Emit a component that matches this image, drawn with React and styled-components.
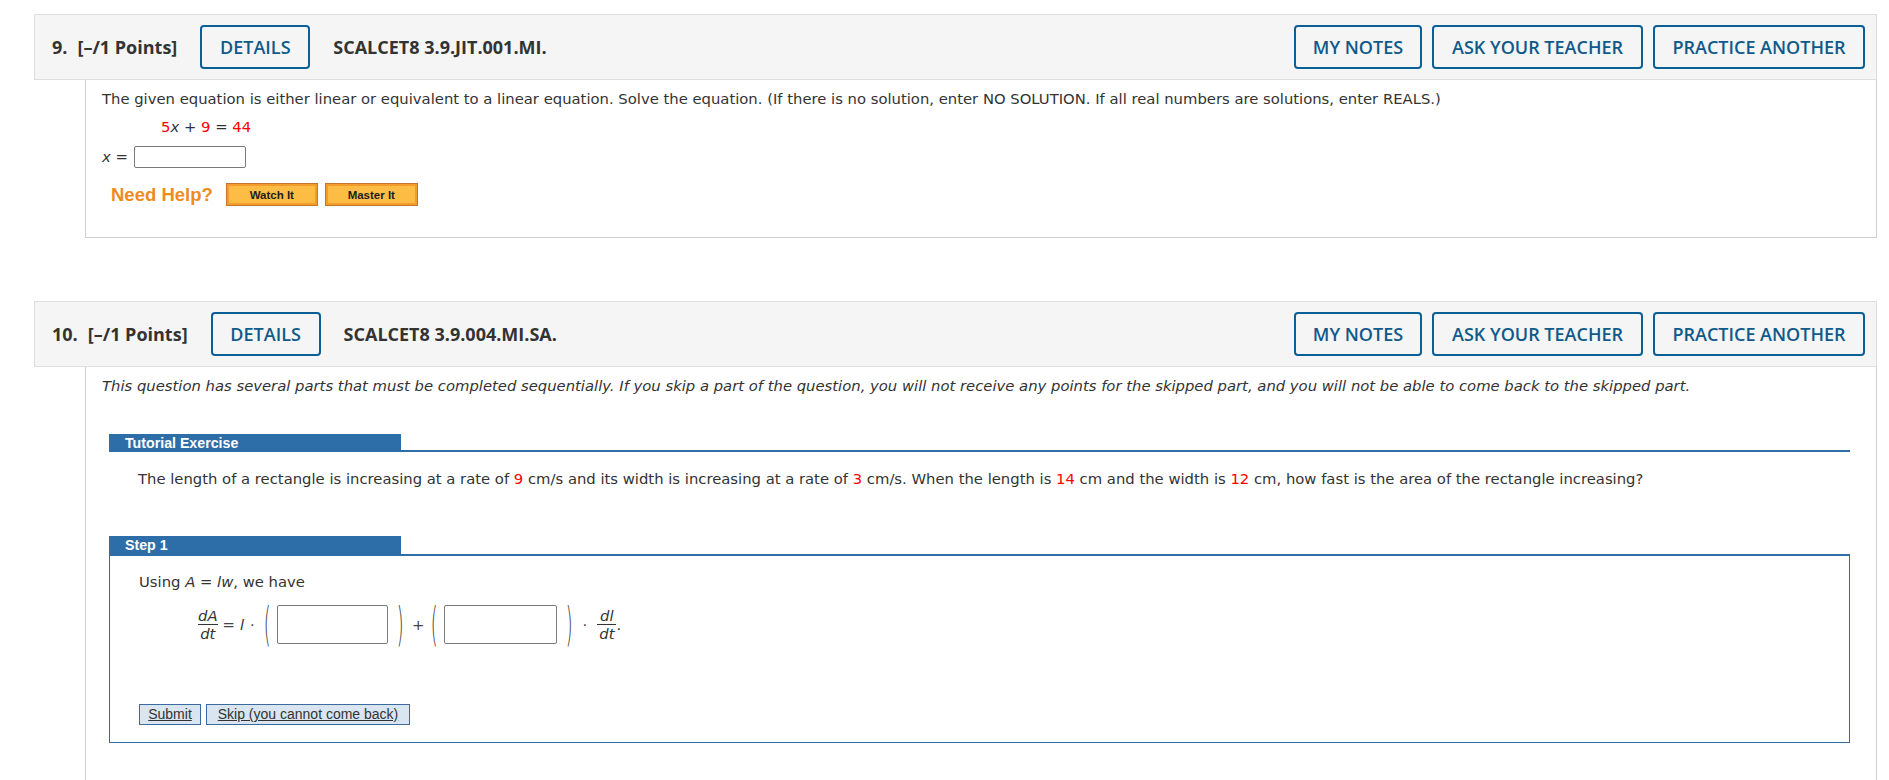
import React from 'react';
import styled, { createGlobalStyle } from 'styled-components';

const Global = createGlobalStyle`
  html, body { margin: 0; padding: 0; background: #fff; }
  body { font-family: "DejaVu Sans", Verdana, sans-serif; color: #333; }
`;

const Page = styled.div`
  width: 1889px;
  height: 780px;
  overflow: hidden;
  box-sizing: border-box;
  padding: 14px 12px 0 34px;
`;

const Question = styled.section`
  margin-bottom: ${p => p.$gap || 0}px;
`;

const Header = styled.div`
  display: flex;
  align-items: center;
  height: 66px;
  box-sizing: border-box;
  background: #f5f5f5;
  border: 1px solid #dedede;
  padding: 0 11px 0 17px;
  font-family: "Open Sans", sans-serif;
  font-size: 18px;
  color: #333;
`;

const Num = styled.span`
  font-weight: 700;
  margin-right: 10px;
`;

const Points = styled.span`
  font-weight: 700;
  margin-right: 23px;
`;

const Title = styled.span`
  font-weight: 700;
  margin-left: 23px;
`;

const HButton = styled.button`
  height: 44px;
  box-sizing: border-box;
  border: 2px solid #0a5f97;
  border-radius: 4px;
  background: transparent;
  color: #0f5a8a;
  font-family: "Open Sans", sans-serif;
  font-size: 18px;
  font-weight: 600;
  padding: 0;
  white-space: nowrap;
  width: ${p => p.$w}px;
  cursor: pointer;
`;

const RightGroup = styled.div`
  margin-left: auto;
  display: flex;
  gap: 10px;
`;

const Body = styled.div`
  margin-left: 51px;
  border: 1px solid #d0d0d0;
  border-top: none;
  padding: 9px 16px 0 16px;
  height: ${p => (p.$h ? `${p.$h}px` : 'auto')};
  box-sizing: border-box;
  font-size: 14.8px;
  line-height: 20px;
  ${p => p.$open && 'border-bottom: none; min-height: 420px;'}
`;

const Para = styled.div`
  font-style: ${p => (p.$italic ? 'italic' : 'normal')};
  margin: 0 0 0 ${p => p.$indent || 0}px;
  margin-top: ${p => p.$top || 0}px;
  white-space: nowrap;
`;

const Red = styled.span`
  color: #f00;
`;

const Var = styled.i`
  font-style: italic;
`;

const AnswerRow = styled.div`
  display: flex;
  align-items: center;
  gap: 6px;
  margin-top: ${p => p.$top || 0}px;
  height: ${p => p.$h || 22}px;
`;

const AnswerBox = styled.input`
  width: ${p => p.$w}px;
  height: ${p => p.$h}px;
  box-sizing: border-box;
  border: 1px solid #7a7a7a;
  border-radius: 2px;
  padding: 0;
  margin: 0;
  background: #fff;
`;

const HelpRow = styled.div`
  display: flex;
  align-items: center;
  margin-top: 15px;
  margin-left: 9px;
`;

const NeedHelp = styled.span`
  font-family: "Liberation Sans", Arial, sans-serif;
  font-weight: 700;
  font-size: 18.5px;
  color: #ee8b1f;
  margin-right: 13px;
`;

const HelpButton = styled.button`
  width: ${p => p.$w}px;
  height: 23px;
  box-sizing: border-box;
  border: 1px solid #c3762c;
  box-shadow: inset 0 0 0 2px #f39c2c;
  background: #fdbc44;
  font-family: "Liberation Sans", Arial, sans-serif;
  font-weight: 700;
  font-size: 11.5px;
  color: #1d1d1d;
  padding: 0;
  margin-right: 7px;
`;

const Section = styled.div`
  margin: ${p => p.$top}px 10px 0 7px;
`;

const TabBar = styled.div`
  display: flex;
  align-items: flex-end;
  border-bottom: 2px solid #2e6ea8;
  height: ${p => p.$h}px;
  box-sizing: border-box;
`;

const Tab = styled.div`
  width: 292px;
  height: 100%;
  background: #2e6ea8;
  color: #fff;
  font-family: "Liberation Sans", Arial, sans-serif;
  font-weight: 700;
  font-size: 14.2px;
  line-height: 19px;
  padding-left: 16px;
  box-sizing: border-box;
  margin-bottom: -2px;
`;

const StepBox = styled.div`
  border: 1px solid #2e6ea8;
  border-top: none;
  padding: 16px 29px 16px 29px;
  height: 187px;
  box-sizing: border-box;
`;

const MathRow = styled.div`
  display: flex;
  align-items: center;
  margin: 12px 0 0 59px;
  height: 41px;
`;

const Frac = styled.span`
  display: inline-flex;
  flex-direction: column;
  align-items: center;
  font-style: italic;
  font-size: 14.8px;
  line-height: 16px;
  margin: ${p => p.$m || '0'};
`;

const FracBottom = styled.span`
  border-top: 1px solid #333;
  padding: 1px 2px 0;
  align-self: stretch;
  text-align: center;
`;

const Op = styled.span`
  margin: 0 ${p => p.$m || 4}px;
  color: #444;
`;

const Paren = styled.span`
  display: inline-block;
  font-size: 22px;
  font-weight: 300;
  color: #3a3a3a;
  transform: scale(0.8, 2.1);
  margin: 0 ${p => p.$r ?? 4}px 0 ${p => p.$l ?? 4}px;
  line-height: 20px;
`;

const ButtonRow = styled.div`
  display: flex;
  gap: 5px;
  margin-top: 59px;
`;

const SubmitButton = styled.button`
  height: 21px;
  box-sizing: border-box;
  background: #d9e5f0;
  border: 1px solid #3b6b9c;
  font-family: "Liberation Sans", Arial, sans-serif;
  font-size: 14px;
  color: #333;
  text-decoration: underline;
  padding: 0;
  line-height: 17px;
  width: ${p => p.$w}px;
`;

function QHeader({ num, title }) {
  return (
    <Header>
      <Num>{num}.</Num>
      <Points>[–/1 Points]</Points>
      <HButton $w={110}>DETAILS</HButton>
      <Title>{title}</Title>
      <RightGroup>
        <HButton $w={128}>MY NOTES</HButton>
        <HButton $w={211}>ASK YOUR TEACHER</HButton>
        <HButton $w={212}>PRACTICE ANOTHER</HButton>
      </RightGroup>
    </Header>
  );
}

export default function App() {
  return (
    <Page>
      <Global />
      <Question $gap={63}>
        <QHeader num="9" title="SCALCET8 3.9.JIT.001.MI." />
        <Body $h={158}>
          <Para>
            The given equation is either linear or equivalent to a linear equation. Solve the equation. (If there is no solution, enter NO SOLUTION. If all real numbers are solutions, enter REALS.)
          </Para>
          <Para $indent={59} $top={8}>
            <Red>5</Red><Var>x</Var> + <Red>9</Red> = <Red>44</Red>
          </Para>
          <AnswerRow $top={9}>
            <span><Var>x</Var> =</span>
            <AnswerBox $w={112} $h={22} />
          </AnswerRow>
          <HelpRow>
            <NeedHelp>Need Help?</NeedHelp>
            <HelpButton $w={92}>Watch It</HelpButton>
            <HelpButton $w={93}>Master It</HelpButton>
          </HelpRow>
        </Body>
      </Question>
      <Question>
        <QHeader num="10" title="SCALCET8 3.9.004.MI.SA." />
        <Body $open>
          <Para $italic>
            This question has several parts that must be completed sequentially. If you skip a part of the question, you will not receive any points for the skipped part, and you will not be able to come back to the skipped part.
          </Para>
          <Section $top={36}>
            <TabBar $h={20}>
              <Tab>Tutorial Exercise</Tab>
            </TabBar>
            <Para $indent={29} $top={17}>
              The length of a rectangle is increasing at a rate of <Red>9</Red> cm/s and its width is increasing at a rate of <Red>3</Red> cm/s. When the length is <Red>14</Red> cm and the width is <Red>12</Red> cm, how fast is the area of the rectangle increasing?
            </Para>
          </Section>
          <Section $top={45}>
            <TabBar $h={22}>
              <Tab>Step 1</Tab>
            </TabBar>
            <StepBox>
              <Para>
                Using <Var>A</Var> = <Var>lw</Var>, we have
              </Para>
              <MathRow>
                <Frac>
                  <span>dA</span>
                  <FracBottom>dt</FracBottom>
                </Frac>
                <Op $m={5}>=</Op>
                <Var>l</Var>
                <Op $m={6}>·</Op>
                <Paren $l={2} $r={6}>(</Paren>
                <AnswerBox $w={111} $h={39} />
                <Paren $l={8} $r={4}>)</Paren>
                <Op $m={3}>+</Op>
                <Paren $l={3} $r={5}>(</Paren>
                <AnswerBox $w={113} $h={39} />
                <Paren $l={8} $r={5}>)</Paren>
                <Op $m={4}>·</Op>
                <Frac $m="0 0 0 6px">
                  <span>dl</span>
                  <FracBottom>dt</FracBottom>
                </Frac>
                <span>.</span>
              </MathRow>
              <ButtonRow>
                <SubmitButton $w={62}>Submit</SubmitButton>
                <SubmitButton $w={204}>Skip (you cannot come back)</SubmitButton>
              </ButtonRow>
            </StepBox>
          </Section>
        </Body>
      </Question>
    </Page>
  );
}
